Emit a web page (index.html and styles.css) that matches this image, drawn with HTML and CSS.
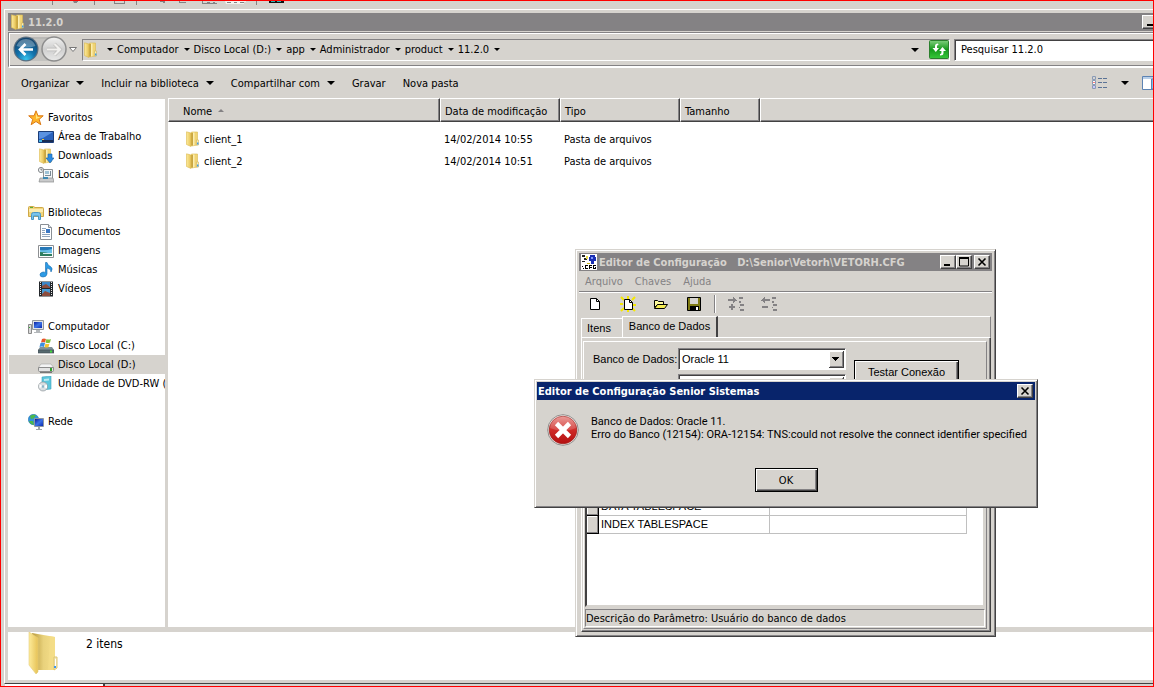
FILE: index.html
```
<!DOCTYPE html>
<html lang="pt-BR">
<head>
<meta charset="utf-8">
<title>11.2.0</title>
<link rel="stylesheet" href="styles.css">
</head>
<body>
<svg class="defs" aria-hidden="true">
  <defs>
    <linearGradient id="gold" x1="0" x2="1"><stop offset="0" stop-color="#fdeb9a"/><stop offset="1" stop-color="#e6c256"/></linearGradient>
    <linearGradient id="goldback" x1="0" x2="1"><stop offset="0" stop-color="#b99a3c"/><stop offset=".5" stop-color="#e9d27c"/><stop offset="1" stop-color="#f6df8a"/></linearGradient>
    <radialGradient id="blueball" cx=".5" cy=".95" r=".9"><stop offset="0" stop-color="#38c4ee"/><stop offset=".45" stop-color="#1272ac"/><stop offset="1" stop-color="#11456f"/></radialGradient>
    <linearGradient id="greyball" x2="0" y2="1"><stop offset="0" stop-color="#f2f2f1"/><stop offset=".5" stop-color="#cfcfcf"/><stop offset="1" stop-color="#e9e9e8"/></linearGradient>
    <linearGradient id="green" x2="0" y2="1"><stop offset="0" stop-color="#7fcf7d"/><stop offset=".5" stop-color="#169a1c"/><stop offset="1" stop-color="#37c83a"/></linearGradient>
    <linearGradient id="screen" x2="1" y2="1"><stop offset="0" stop-color="#0a1f9c"/><stop offset=".5" stop-color="#3c72e6"/><stop offset="1" stop-color="#0b2bb0"/></linearGradient>
    <linearGradient id="redball" x2="0" y2="1"><stop offset="0" stop-color="#e78a85"/><stop offset=".5" stop-color="#cf2a27"/><stop offset="1" stop-color="#b40f10"/></linearGradient>
    <symbol id="folder" viewBox="0 0 16 16">
      <path d="M6.500 1h6v13l-6 1z" fill="#f0d474" stroke="#d9b850" stroke-width=".6"/>
      <path d="M6 2h2v12.500H6z" fill="#c9a640"/>
      <path d="M8 1.500h1.500v12.800L8 14.500z" fill="#fbeeb2"/>
      <path d="M1.500.8L6 2v13.500l-4.500-2z" fill="url(#gold)" stroke="#dcb84e" stroke-width=".6"/>
      <path d="M11.500 9h2v5h-2z" fill="#f8eebc" stroke="#d0b35c" stroke-width=".6"/><path d="M12 11.500h1.500v2H12z" fill="#3f9be8"/>
    </symbol>
  </defs>
</svg>

<div class="desktop">
  <svg class="strip" width="300" height="8" aria-hidden="true" fill="#848284">
    <path d="M51 0h1v4h-1zM93 0h1v4h-1zM135 0h1v4h-1zM255 0h1v4h-1zM72 0h5v1h-1v1h-3zM113 0h1v2h9V0h1v3h-11zM159 0h5v2h-2V1h-3zM178 0h1v1h6v1h-7zM201 0h1v2h4V1h3v1h3V1h2v1h2v1h-15z"/>
    <path d="M224 0h21v1h-2v2h-18z" fill="#f4f2ee"/><path d="M226 1h4v1h-4zM233 1h3v1h-3zM239 1h4v1h-4z"/>
    <path d="M268 0h15v2h-15z" fill="#111"/><path d="M270 0h4v1h-4zM276 0h4v1h-4z" fill="#2bb6b6"/>
  </svg>

  <main class="explorer">
    <header class="caption">
      <svg width="16" height="16"><use href="#folder"/></svg>
      <h1>11.2.0</h1>
      <button class="capbtn" aria-label="Minimizar"><svg width="12" height="12"><path d="M3 8h6v2H3z"/></svg></button>
    </header>

    <nav class="addressbar" aria-label="Endereço">
      <div class="travel">
        <svg width="66" height="30" viewBox="0 0 66 30" aria-hidden="true">
          <path d="M14 2h26q12 0 12 12t-12 12H14z" fill="#c3c2bf"/>
          <path d="M14 3h26q10 0 10 11" fill="none" stroke="#b0afac"/>
          <circle cx="13" cy="14" r="12.500" fill="#5b6f80"/><circle cx="13" cy="14" r="11.300" fill="url(#blueball)"/>
          <path d="M3.500 11Q6 4 13 4t9.500 7Q13 14 3.500 11z" fill="#fff" opacity=".3"/>
          <path d="M12.500 9L7 14.500 12.500 20M7.500 14.500H20" fill="none" stroke="#fff" stroke-width="2.600"/>
          <circle cx="41" cy="14" r="12" fill="url(#greyball)" stroke="#8d8d8d" stroke-width="1.500"/>
          <path d="M41.500 9l5.500 5.500L41.500 20M46.500 14.500H34" fill="none" stroke="#b9b8b6" stroke-width="3.400"/>
          <path d="M41.500 9l5.500 5.500L41.500 20M46.500 14.500H34" fill="none" stroke="#f1f0ee" stroke-width="2.200"/>
          <path d="M56.500 12.500h7L60 16.500z" fill="#fff" stroke="#777" />
        </svg>
      </div>
      <div class="crumbs">
        <svg class="crumbicon" width="16" height="16"><use href="#folder"/></svg>
        <i class="tri"></i>
        <a href="#">Computador</a><i class="tri"></i>
        <a href="#">Disco Local (D:)</a><i class="tri"></i>
        <a href="#">app</a><i class="tri"></i>
        <a href="#">Administrador</a><i class="tri"></i>
        <a href="#">product</a><i class="tri"></i>
        <a href="#">11.2.0</a><i class="tri"></i>
        <i class="tri big last"></i>
        <button class="refresh" aria-label="Atualizar">
          <svg width="20" height="19" viewBox="0 0 20 19"><rect x=".5" y=".5" width="19" height="18" rx="1" fill="url(#green)" stroke="#2b7f2d"/><path d="M9 3.500Q6 3.500 6 6v2H3.500l3.300 4L10 8H8V6q0-1 1.500-1zM11 15.500q3.500 0 3.500-2.500v-2H17l-3.500-4-3.300 4h2.200v2q0 1-1.400 1z" fill="#fff"/></svg>
        </button>
      </div>
      <input class="search" type="text" aria-label="Pesquisar" value="Pesquisar 11.2.0">
    </nav>

    <div class="commands">
      <button>Organizar <i class="tri big"></i></button>
      <button>Incluir na biblioteca <i class="tri big"></i></button>
      <button>Compartilhar com <i class="tri big"></i></button>
      <button>Gravar</button>
      <button>Nova pasta</button>
      <span class="views">
        <button aria-label="Exibição"><svg width="16" height="14" viewBox="0 0 16 14"><path d="M.5.5h3v3h-3zM.5 4.500h3v4h-3zM.5 9.500h3v3h-3z" fill="#fff" stroke="#8a9ab4"/><path d="M1.500 1.500h1v1h-1z" fill="#555"/><path d="M1.500 6h1v1h-1z" fill="red"/><path d="M1.500 10.500h1v1h-1z" fill="#22f"/><path d="M6 2.500h4M11 2.500h4M6 6.500h4M11 6.500h4M6 11.500h4M11 11.500h4" stroke="#5b7396"/></svg></button>
        <button aria-label="Mais opções"><i class="tri big"></i></button>
        <button aria-label="Painel de visualização"><svg width="18" height="14" viewBox="0 0 18 14"><path d="M.5.5h17v13H.5z" fill="#fff" stroke="#5d83b3"/><path d="M1 1h17v2H1z" fill="#b9cfe8"/><path d="M9.500 3h8v10h-8z" fill="#7cc4ea" stroke="#5d83b3"/></svg></button>
      </span>
    </div>

    <div class="body">
      <aside class="tree">
        <ul>
          <li class="root"><svg width="16" height="16" viewBox="0 0 16 16"><path d="M8 .8l2 5h5.200l-4 3.500 1.600 5.400L8 11.500l-4.800 3.200 1.500-5.400-4-3.500H6z" fill="#ffb52a" stroke="#dc7b18"/><path d="M8 3l1.500 4H13L8 9z" fill="#ffe680"/></svg><a href="#">Favoritos</a></li>
          <li><svg width="16" height="16" viewBox="0 0 16 16"><path d="M.5 2.500h15v11H.5z" fill="#2a62bd" stroke="#1b3d78"/><path d="M1 3h14L5 9 1 10z" fill="#5b92e0"/><path d="M1 11h14v2H1z" fill="#1a2d52"/><path d="M1 11h3v2H1z" fill="#48b8e6"/><path d="M4 10h2v1H4z" fill="#f3c433"/></svg><a href="#">Área de Trabalho</a></li>
          <li><svg width="16" height="16"><use href="#folder"/><path d="M10 6h4v4h2l-4 5-4-5h2z" fill="#2d8be0" stroke="#1a62aa" stroke-width=".6"/></svg><a href="#">Downloads</a></li>
          <li><svg width="16" height="16" viewBox="0 0 16 16"><path d="M5.500 2.500h9v9h-9z" fill="#f3f6f8" stroke="#8d9194"/><path d="M7 4h4v3H7z" fill="#9fc3d6"/><path d="M12 4h1v4h-1zM7 8h6v1H7z" fill="#7a8a95"/><path d="M2 11h13l1 4H1z" fill="#c9cacb" stroke="#8b8c8d" stroke-width=".7"/><path d="M5 10h5v2H5z" fill="#3c89b3"/><circle cx="3" cy="3" r="2.600" fill="#eef2f4" stroke="#85898c"/><path d="M3 1.500V3h1.500" fill="none" stroke="#555" stroke-width=".7"/></svg><a href="#">Locais</a></li>
          <li class="gap"></li>
          <li class="root"><svg width="16" height="16" viewBox="0 0 16 16"><path d="M.5 2.500q0-1 1-1h4l1.500 1h7.500q1 0 1 1v8H.5z" fill="#f2d57c" stroke="#cfa847"/><path d="M1 4h14v3H1z" fill="#fbecb0"/><path d="M2 2h3v1H2z" fill="#58ad3c"/><path d="M3.500 14.500V9.500q0-2 2-2h5q2 0 2 2v5h-2v-3.500h-5v3.500z" fill="#79c4ec" stroke="#4b97c6"/></svg><a href="#">Bibliotecas</a></li>
          <li><svg width="16" height="16" viewBox="0 0 16 16"><path d="M2.500.5h8l3 3v12h-11z" fill="#fff" stroke="#8a8f95"/><path d="M10.500.5v3h3" fill="#dde6ee" stroke="#8a8f95"/><path d="M4 4.500h4M4 6.500h3M4 8.500h3M4 10.500h8M4 12.500h8" stroke="#8fa5bd"/><path d="M8 5h4v4H8z" fill="#3a78c4"/></svg><a href="#">Documentos</a></li>
          <li><svg width="16" height="16" viewBox="0 0 16 16"><path d="M.5 2.500h15v12H.5z" fill="#fff" stroke="#8d8f92"/><path d="M2 4h12v9H2z" fill="#69bfe8"/><path d="M2 4h12v2Q7 8 2 7z" fill="#2678b8"/><path d="M2 9q6 0 12 2v2H2z" fill="#2e7d5e"/><path d="M5 10h9v1H5z" fill="#d7eef3"/></svg><a href="#">Imagens</a></li>
          <li><svg width="16" height="16" viewBox="0 0 16 16"><path d="M7.500.5H9q.5 3 3.500 4 3 2 .5 5.500.5-3-4-4V12q-.5 3-4 3-3 0-3-2.200T5 10q1.500 0 2.500.5z" fill="#2c9be6" stroke="#1769ad" stroke-width=".6"/></svg><a href="#">Músicas</a></li>
          <li><svg width="16" height="16" viewBox="0 0 16 16"><path d="M1 .5h14v15H1z" fill="#23272b"/><path d="M4 1h8v6H4z" fill="#3d86c6"/><path d="M4 8h8v7H4z" fill="#469bd6"/><path d="M4 5l4-2 4 3v1H4zM4 13l3-3 5 2v3H4z" fill="#8c4d3e"/><path d="M2.500 1v14M13.500 1v14" stroke="#e6e6e6" stroke-dasharray="1 1"/></svg><a href="#">Vídeos</a></li>
          <li class="gap"></li>
          <li class="root"><svg width="16" height="16" viewBox="0 0 16 16"><path d="M.5 5.500h3v9h-3z" fill="#d9d9d9" stroke="#8b8b8b"/><path d="M1 8h1v1H1z" fill="#3a3"/><path d="M4.500 1.500h11v9h-11z" fill="#dfe2e6" stroke="#92979c"/><path d="M6 3h8v6H6z" fill="url(#screen)"/><path d="M8 11h4v2h2v1H6v-1h2z" fill="#b4b8bb"/></svg><a href="#">Computador</a></li>
          <li><svg width="16" height="16" viewBox="0 0 16 16"><path d="M2 9h12l2 3v3H0v-3z" fill="#7e9097"/><path d="M0 12h16v3H0z" fill="#56696f" stroke="#3f4c51" stroke-width=".6"/><path d="M12 12.500h2v2h-2z" fill="#3fdc3a"/><path d="M4 1q2-1 4 0L7 4.500Q5 3.500 3 4.500z" fill="#e8562a"/><path d="M8.500 1q2 1 4.500 0l-1 3.500q-2 1-4.500 0z" fill="#7fbf3a"/><path d="M2.500 5q2-1 4.500 0L6 9Q4 8 1.500 9z" fill="#3b8ee0"/><path d="M7.500 5.500q2 1 4 0l-1 3.500q-2 1-4 0z" fill="#f6c330"/></svg><a href="#">Disco Local (C:)</a></li>
          <li class="selected"><svg width="16" height="16" viewBox="0 0 16 16"><path d="M3 7h10l3 4H0z" fill="#f4f4f4" stroke="#a5a5a5" stroke-width=".6"/><path d="M.5 10.500h15v3q0 1-1 1h-13q-1 0-1-1z" fill="#e4e4e4" stroke="#8d8d8d"/><path d="M12 11h2v3h-2z" fill="#2fa32c"/><path d="M2 15h12v1H2z" fill="#777"/></svg><a href="#">Disco Local (D:)</a></li>
          <li><svg width="16" height="16" viewBox="0 0 16 16"><path d="M4 1l9-1v13l-9 1z" fill="#5cc6dc" stroke="#3fa3bd" stroke-width=".6"/><path d="M6 3l5-.5v2L6 5z" fill="#b9eaf2"/><circle cx="5" cy="10.500" r="4.500" fill="#dadfe2" stroke="#8e959a" stroke-width=".7"/><path d="M5 10.500L1.500 8v4zM5 10.500l4-2v4z" fill="#fff"/><circle cx="5" cy="10.500" r="1.300" fill="#8db3c6"/></svg><a href="#">Unidade de DVD-RW (E:)</a></li>
          <li class="gap"></li>
          <li class="root"><svg width="16" height="16" viewBox="0 0 16 16"><circle cx="5.500" cy="5.500" r="5.200" fill="#2f93dc" stroke="#1b6aa8" stroke-width=".5"/><path d="M2 2q3-2 6-1L6 4 3 5zM1 7l4 0 1 4q-4-1-5-4z" fill="#4db849"/><path d="M6.500 4.500h9v8h-9z" fill="#cfd6dd" stroke="#8e979f"/><path d="M7 5h8v7H7z" fill="url(#screen)"/><path d="M10 13h2v2h2v1H8v-1h2z" fill="#9da3a8"/></svg><a href="#">Rede</a></li>
        </ul>
      </aside>

      <section class="files">
        <table>
          <colgroup><col class="c-name"><col class="c-mid"><col class="c-mid"><col class="c-size"><col></colgroup>
          <thead><tr><th>Nome<i class="sort"></i></th><th>Data de modificação</th><th>Tipo</th><th>Tamanho</th><th></th></tr></thead>
          <tbody>
            <tr><td><span class="file"><svg width="16" height="16"><use href="#folder"/></svg>client_1</span></td><td>14/02/2014 10:55</td><td>Pasta de arquivos</td><td></td><td></td></tr>
            <tr><td><span class="file"><svg width="16" height="16"><use href="#folder"/></svg>client_2</span></td><td>14/02/2014 10:51</td><td>Pasta de arquivos</td><td></td><td></td></tr>
          </tbody>
        </table>
      </section>
    </div>

    <footer class="details">
      <svg width="32" height="44" viewBox="0 0 32 44" aria-hidden="true"><path d="M4 1l23 4v33l-17 0z" fill="url(#goldback)"/><path d="M22 4l5 1v33l-7 0z" fill="#f3dd88" opacity=".7"/><path d="M1 0l9 6v34l-2 2-7-9z" fill="url(#gold)" stroke="#e4cc7c" stroke-width=".6"/><path d="M26 25h3v11l-3 2z" fill="#f6eab8" stroke="#dcc474"/><path d="M27 27h1v7h-1z" fill="#fff"/><path d="M26 34h2v2h-2z" fill="#3f97ee"/></svg>
      <p>2 itens</p>
    </footer>
  </main>
  <div class="under"></div>

  <section class="editor" aria-label="Editor de Configuração">
    <header class="caption">
      <svg width="16" height="16" viewBox="0 0 16 16"><path d="M0 0h16v16H0z" fill="#fff"/><path d="M1 1h3v2H1zM3 4h3v2H3zM1 7h3v1H1z" fill="#222"/><path d="M5 2h2v3H5z" fill="#e8d84a"/><path d="M9 1h5v2h1v4h-2v3h-3V7H8V3h1z" fill="#1a2fb4"/><path d="M10 3h2v2h-2z" fill="#7f98ff"/><path d="M6 9h3v1H6z" fill="#c9b81e"/><path d="M1 12h1v1H1zM4 11h3v1H5v2h2v1H4zM8 11h3v1H9v1h2v1H9v1H8zM12 11h3v1h-2v2h1v-1h1v2h-3zM2 14h1v1H2z" fill="#000"/></svg>
      <h2>Editor de Configuração&nbsp;&nbsp; D:\Senior\Vetorh\VETORH.CFG</h2>
      <button class="capbtn" aria-label="Minimizar"><svg width="12" height="10"><path d="M2 7h6v2H2z"/></svg></button>
      <button class="capbtn" aria-label="Maximizar"><svg width="12" height="10"><path d="M1.500 1h9v8h-9z" fill="none" stroke="#000"/><path d="M1 0h10v2H1z"/></svg></button>
      <button class="capbtn spaced" aria-label="Fechar"><svg width="12" height="10"><path d="M2.500 1.500l7 7M9.500 1.500l-7 7" stroke="#000" stroke-width="1.600"/></svg></button>
    </header>
    <div class="menubar"><button disabled>Arquivo</button><button disabled>Chaves</button><button disabled>Ajuda</button></div>
    <div class="tools">
      <button aria-label="Novo"><svg width="16" height="16" viewBox="0 0 16 16"><path d="M3.500 2.500h6l3 3v8h-9z" fill="#fff" stroke="#000"/><path d="M9.500 2.500v3h3" fill="none" stroke="#000"/></svg></button>
      <button aria-label="Novo a partir"><svg width="16" height="16" viewBox="0 0 16 16"><path d="M1 1l3 3M8 0v3M15 1l-3 3M0 8h3M13 9h3M1 15l3-3M8 16v-3M15 15l-3-3" stroke="#f5e800" stroke-width="2"/><path d="M4.500 3.500h5l3 3v7h-8z" fill="#fff" stroke="#000"/><path d="M9.500 3.500v3h3" fill="none" stroke="#000"/></svg></button>
      <button aria-label="Abrir"><svg width="16" height="16" viewBox="0 0 16 16"><path d="M1.500 11.500v-7h3l1 1h5v3h-6z" fill="#fffb9c" stroke="#000"/><path d="M1.500 12.500l3-4h10l-3 4z" fill="#f4ec53" stroke="#000"/></svg></button>
      <button aria-label="Salvar"><svg width="16" height="16" viewBox="0 0 16 16"><path d="M1.500 1.500h13v13h-13z" fill="#7f7a12" stroke="#000"/><path d="M4 2h8v6H4z" fill="#d6d3ce"/><path d="M4 10h9v5H4z"/><path d="M10 11h2v3h-2z" fill="#fff"/></svg></button>
      <i class="sep"></i>
      <button disabled aria-label="Inserir"><svg width="18" height="16" viewBox="0 0 18 16" fill="#848284"><path d="M1 3h5V1h1v1h1v1h1v1h1v1H8v1H7v1H6V5H1zM4 8h2v2h2v2H6v2H4v-2H2v-2h2zM12 1h4v2h-4zM12 5h2v2h-2zM13 8h4v2h-4zM12 11h1v1h-1zM13 13h4v2h-4z"/></svg></button>
      <button disabled aria-label="Remover"><svg width="18" height="16" viewBox="0 0 18 16" fill="#848284"><path d="M10 3H5V1H4v1H3v1H2v1H1v1h2v1h1v1h1V5h5zM2 10h6v2H2zM12 1h4v2h-4zM12 5h2v2h-2zM13 8h4v2h-4zM12 11h1v1h-1zM13 13h4v2h-4z"/></svg></button>
    </div>
    <div class="tabs" role="tablist"><button role="tab">Itens</button><button role="tab" class="active" aria-selected="true">Banco de Dados</button><i class="rest"></i></div>
    <div class="page">
      <div class="panel">
        <div class="form">
          <label for="db">Banco de Dados:</label>
          <select id="db"><option>Oracle 11</option></select>
          <select class="second" aria-label="Servidor"><option></option></select>
          <button class="push">Testar Conexão</button>
        </div>
        <div class="grid">
          <table>
            <colgroup><col class="g-mark"><col class="g-key"><col></colgroup>
            <tbody>
              <tr><th></th><td>DATA TABLESPACE</td><td></td></tr>
              <tr><th></th><td>INDEX TABLESPACE</td><td></td></tr>
            </tbody>
          </table>
        </div>
        <p class="hint">Descrição do Parâmetro: Usuário do banco de dados</p>
      </div>
    </div>
  </section>

  <section class="dialog" role="alertdialog" aria-labelledby="dlg">
    <header class="caption">
      <h2 id="dlg">Editor de Configuração Senior Sistemas</h2>
      <button class="capbtn" aria-label="Fechar"><svg width="12" height="10"><path d="M2.500 1.500l7 7M9.500 1.500l-7 7" stroke="#000" stroke-width="1.600"/></svg></button>
    </header>
    <div class="message">
      <svg width="32" height="32" viewBox="0 0 32 32" aria-hidden="true"><circle cx="16" cy="16" r="15.300" fill="#f2eeec" stroke="#8f8c8a"/><circle cx="16" cy="16" r="13.800" fill="url(#redball)" stroke="#a32320" stroke-width=".8"/><path d="M3 14a13 13 0 0 1 26 0Q16 20 3 14z" fill="#fff" opacity=".16"/><path d="M9.500 9.500l13 13M22.500 9.500l-13 13" stroke="#fff" stroke-width="4.600"/></svg>
      <p>Banco de Dados: Oracle 11.<br>Erro do Banco (12154): ORA-12154: TNS:could not resolve the connect identifier specified</p>
    </div>
    <button class="push ok">OK</button>
  </section>
</div>
</body>
</html>
```
FILE: styles.css
```
:root {
  --face: #d6d3ce;
  --shadow: #848284;
  --dark: #424142;
  --ui: "DejaVu Sans Condensed", "DejaVu Sans", sans-serif;
}
* { box-sizing: border-box; }
body { margin: 0; font: 11px/13px var(--ui); color: #000; background: var(--face); }
h1, h2, p, ul { margin: 0; padding: 0; font: inherit; }
ul { list-style: none; }
a { color: inherit; text-decoration: none; }
svg { display: block; flex: none; }
button, input, select { font: inherit; color: inherit; margin: 0; padding: 0; border: 0; background: none; border-radius: 0; }
.defs { position: absolute; width: 0; height: 0; }

.desktop {
  position: relative;
  display: flex;
  flex-direction: column;
  height: 100vh;
  overflow: hidden;
  border: 1px solid red;
  background: var(--face);
}
.strip { height: 8px; }
.under { flex: none; height: 2px; width: 100px; margin-left: 4px; background: #fff; border-right: 2px solid var(--dark); }

/* captions */
.caption { display: flex; align-items: center; height: 18px; gap: 2px; padding: 0 2px; background: var(--shadow); color: var(--face); flex: none; }
.caption h1, .caption h2 { flex: 1; font-weight: bold; white-space: nowrap; }
.capbtn {
  display: flex; justify-content: center; align-items: center;
  width: 16px; height: 14px; flex: none; background: var(--face);
  border: 1px solid; border-color: #fff var(--dark) var(--dark) #fff;
  box-shadow: inset -1px -1px var(--shadow);
}

/* explorer */
.explorer {
  flex: 1; min-height: 0; display: flex; flex-direction: column;
  margin: 0 -8px 0 3px; padding: 3px 0 3px 3px;
  border: 1px solid; border-color: #fff var(--dark) var(--dark) #fff;
  background: var(--face);
}
.explorer .caption { padding: 0 2px; }
.addressbar {
  display: flex; align-items: center; height: 36px; flex: none; margin-top: 1px; padding-left: 4px;
  border: solid; border-width: 1px 0 2px 1px; border-color: var(--shadow) #fff #fff var(--shadow);
  box-shadow: inset 1px 1px #fff, inset 0 -1px var(--shadow);
}
.travel { width: 69px; }
.crumbs {
  flex: 1; display: flex; align-items: center; height: 22px; margin-right: 4px;
  border: 1px solid; border-color: var(--shadow) #fff #fff var(--shadow);
}
.crumbs a { margin-left: 4px; white-space: nowrap; }
.crumbs .tri { margin-left: 5px; }
.crumbs .crumbicon + .tri { margin-left: 8px; }
.crumbs .last { margin: 0 10px 0 auto; }
.tri { display: inline-block; flex: none; border: solid transparent; border-width: 3px 3px 0; border-top-color: #000; }
.tri.big { border-width: 4px 4px 0; }
.refresh { width: 20px; }
.search {
  width: 206px; height: 22px; padding-left: 6px; background: #fff;
  border: 1px solid; border-color: var(--shadow) #fff #fff var(--shadow);
  box-shadow: inset 1px 1px var(--dark);
}
.commands { display: flex; align-items: center; height: 30px; flex: none; padding-left: 13px; gap: 17px; }
.commands button { display: flex; align-items: center; gap: 7px; white-space: nowrap; }
.views { display: flex; align-items: center; gap: 13px; margin-left: auto; }

.body { flex: 1; min-height: 0; display: flex; }
.tree { width: 157px; flex: none; margin-top: 1px; padding: 9px 0 0 1px; background: #fff; overflow: hidden; }
.tree li { display: flex; align-items: center; height: 19px; gap: 4px; padding-left: 29px; white-space: nowrap; }
.tree .root { padding-left: 19px; }
.tree .selected { background: var(--face); }
.files { flex: 1; min-width: 0; margin-left: 3px; background: #fff; }
.files table { width: 100%; table-layout: fixed; border-collapse: separate; border-spacing: 0; }
.c-name { width: 272px; }
.c-mid { width: 120px; }
.c-size { width: 80px; }
.files th {
  height: 24px; padding: 2px 0 0 4px; text-align: left; font-weight: normal; background: var(--face);
  border: 1px solid; border-color: #fff var(--dark) var(--dark) #fff;
  box-shadow: inset -1px -1px var(--shadow);
}
.files th:first-child { padding-left: 14px; }
.sort { display: inline-block; margin: 0 0 3px 6px; border: solid transparent; border-width: 0 3px 3px; border-bottom-color: var(--shadow); }
.files td { height: 22px; padding: 0 0 0 4px; }
.files tbody::before { content: ""; display: table-row; height: 6px; }
.file { display: flex; align-items: center; gap: 3px; padding-left: 13px; }
.details { display: flex; height: 48px; flex: none; margin-top: 5px; padding-left: 20px; gap: 26px; background: #fff; }
.details p { padding-top: 5px; font-size: 12px; line-height: 14px; }

/* editor window */
.editor {
  position: absolute; left: 574px; top: 248px; width: 421px; height: 388px;
  display: flex; flex-direction: column; padding: 2px;
  background: var(--face);
  border: 1px solid; border-color: var(--face) var(--dark) var(--dark) var(--face);
  box-shadow: inset 1px 1px #fff, inset -1px -1px var(--shadow);
}
.editor > .caption { margin: 1px 1px 0; }
.editor .capbtn { margin-left: -2px; }
.editor .capbtn.spaced { margin-left: 0; }
.menubar { display: flex; gap: 12px; height: 21px; margin: 0 1px; padding-left: 6px; border-bottom: 1px solid var(--shadow); box-shadow: 0 1px #fff; }
.menubar button { color: var(--shadow); }
.tools { display: flex; align-items: center; height: 24px; gap: 17px; padding-left: 9px; }
.tools .sep { width: 2px; height: 18px; margin: 0 -6px 0 -5px; border-left: 1px solid var(--shadow); border-right: 1px solid #fff; }
.tools .sep ~ button + button { margin-left: -2px; }
.tabs { display: flex; align-items: flex-end; height: 21px; font-family: "Liberation Sans", sans-serif; padding-left: 3px; }
.tabs button { height: 19px; width: 41px; padding-right: 6px; border: solid #fff; border-width: 1px 0 0 1px; }
.tabs .active { height: 21px; width: 96px; padding: 0 0 2px; border-right: 2px solid var(--dark); }
.tabs .rest { flex: 1; align-self: stretch; margin-right: 2px; border-top: 1px solid #fff; border-right: 1px solid var(--shadow); }
.page {
  flex: 1; min-height: 0; display: flex; margin: 0 2px 2px 3px; padding: 3px 3px 2px 1px;
  border: 1px solid; border-color: #fff var(--dark) var(--dark) #fff;
  box-shadow: inset -1px -1px var(--shadow);
}
.panel { flex: 1; min-width: 0; display: flex; flex-direction: column; padding: 0 1px 1px; border: 1px solid; border-color: #fff var(--shadow) var(--shadow) #fff; }
.form {
  display: grid; grid-template-columns: 85px 168px 106px; column-gap: 0; row-gap: 4px; grid-auto-rows: 22px;
  height: 156px; padding: 6px 0 0 8px; align-items: center;
  font-family: "Liberation Sans", sans-serif;
}
select {
  appearance: none; height: 22px; padding: 0 20px 0 3px;
  border: 1px solid; border-color: var(--shadow) #fff #fff var(--shadow);
  box-shadow: inset 1px 1px var(--dark);
  background:
    linear-gradient(#000, #000) right 9px top 11px / 1px 1px no-repeat,
    linear-gradient(#000, #000) right 8px top 10px / 3px 1px no-repeat,
    linear-gradient(#000, #000) right 7px top 9px / 5px 1px no-repeat,
    linear-gradient(#000, #000) right 6px top 8px / 7px 1px no-repeat,
    linear-gradient(var(--face), var(--face)) right 3px top 3px / 12px 14px no-repeat,
    linear-gradient(var(--shadow), var(--shadow)) right 2px top 3px / 13px 15px no-repeat,
    linear-gradient(#fff, #fff) right 2px top 2px / 14px 16px no-repeat,
    linear-gradient(var(--dark), var(--dark)) right 1px top 2px / 15px 17px no-repeat,
    #fff;
}
.form .second { grid-column: 2; grid-row: 2; }
.push {
  border: 1px solid #000; background: var(--face);
  box-shadow: inset 1px 1px #fff, inset -1px -1px var(--dark), inset -2px -2px var(--shadow);
}
.form .push { grid-column: 3; grid-row: 1 / span 2; height: 24px; margin: 0 -7px 0 8px; align-self: center; }
.grid { flex: 1; background: #fff; border: solid; border-width: 0 2px 2px; border-color: var(--face) var(--face) var(--face) var(--dark); }
.grid table { width: 380px; table-layout: fixed; border-collapse: separate; border-spacing: 0; font-family: "Liberation Sans", sans-serif; }
.g-mark { width: 12px; }
.g-key { width: 171px; }
.grid td { height: 18px; padding: 0 0 0 2px; border: solid #c0c0c0; border-width: 0 1px 1px 0; }
.grid th { background: var(--face); border: solid #000; border-width: 0 1px 1px 0; box-shadow: inset -1px -1px var(--shadow), inset 1px 1px #fff; }
.hint { height: 18px; margin-top: 2px; padding: 2px 0 0; border: 1px solid; border-color: var(--shadow) #fff #fff var(--shadow); white-space: nowrap; }

/* message box */
.dialog {
  position: absolute; left: 533px; top: 378px; width: 504px; height: 129px; padding: 2px;
  display: flex; flex-direction: column;
  background: var(--face);
  border: 1px solid; border-color: var(--face) var(--dark) var(--dark) var(--face);
  box-shadow: inset 1px 1px #fff, inset -1px -1px var(--shadow);
}
.dialog .caption { padding-left: 1px; background: #08246b; color: #fff; }
.message { display: flex; gap: 12px; padding: 14px 0 0 10px; white-space: nowrap; }
.message p { padding-top: 1px; font-family: Roboto, var(--ui); }
.ok { width: 63px; height: 24px; flex: none; margin: 22px auto 0; }
```
